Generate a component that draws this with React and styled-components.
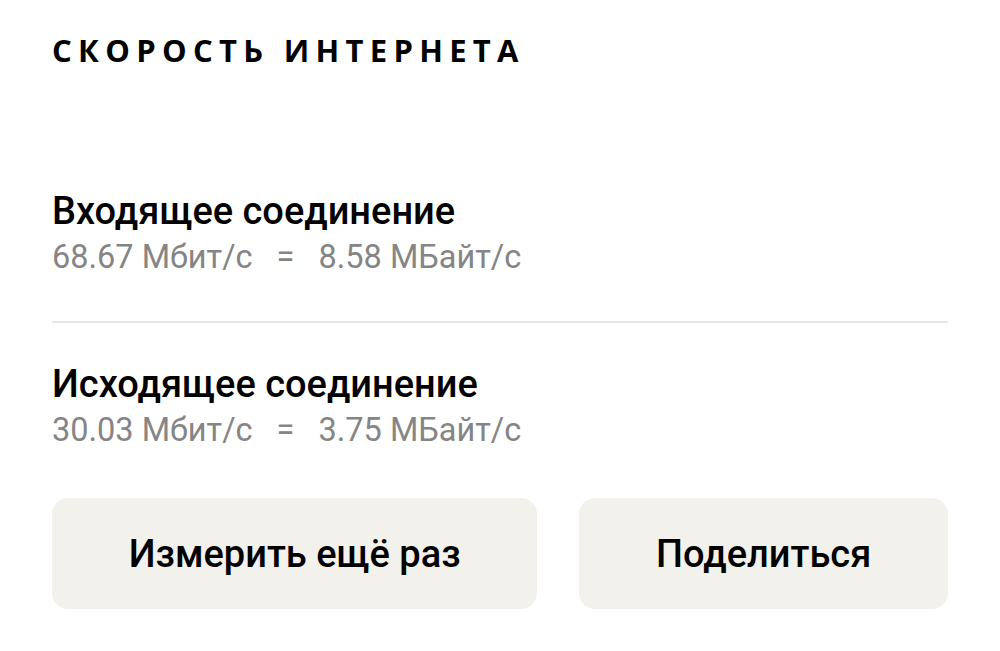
import React from "react";
import styled, { createGlobalStyle } from "styled-components";

const GlobalStyle = createGlobalStyle`
  html, body {
    margin: 0;
    padding: 0;
    background: #ffffff;
  }
  body {
    font-family: Roboto, "Open Sans", Arial, sans-serif;
    color: #000;
  }
`;

const speeds = [
  { title: "Входящее соединение", mbit: "68.67", mbyte: "8.58" },
  { title: "Исходящее соединение", mbit: "30.03", mbyte: "3.75" },
];

function App() {
  return (
    <Page>
      <GlobalStyle />
      <Header>Скорость интернета</Header>
      <Results>
        {speeds.map((s, i) => (
          <React.Fragment key={s.title}>
            {i > 0 && <Divider />}
            <Row>
              <RowTitle>{s.title}</RowTitle>
              <RowValue>
                {s.mbit} Мбит/с<Eq>=</Eq>{s.mbyte} МБайт/с
              </RowValue>
            </Row>
          </React.Fragment>
        ))}
      </Results>
      <Buttons>
        <Button>Измерить ещё раз</Button>
        <Button>Поделиться</Button>
      </Buttons>
    </Page>
  );
}

export default App;

const Page = styled.div`
  width: 1000px;
  height: 651px;
  box-sizing: border-box;
  padding: 30px 52px 0 52px;
  display: flex;
  flex-direction: column;
`;

const Header = styled.h1`
  margin: 0;
  font-family: "Open Sans", sans-serif;
  font-weight: 700;
  font-size: 31px;
  line-height: 40px;
  letter-spacing: 6.3px;
  text-transform: uppercase;
`;

const Results = styled.div`
  margin-top: 117px;
  display: flex;
  flex-direction: column;
`;

const Row = styled.div`
  display: flex;
  flex-direction: column;
`;

const RowTitle = styled.div`
  font-size: 38px;
  font-weight: 500;
  line-height: 48px;
`;

const RowValue = styled.div`
  font-size: 32.5px;
  line-height: 44px;
  color: #858585;
  white-space: pre;
`;

const Eq = styled.span`
  display: inline-block;
  margin: 0 24px;
`;

const Divider = styled.div`
  height: 2px;
  background: #e6e6e6;
  margin: 42px 0 37px;
`;

const Buttons = styled.div`
  margin-top: 46px;
  display: flex;
  gap: 42px;
`;

const Button = styled.button`
  flex: 1 1 auto;
  height: 111px;
  border: none;
  border-radius: 16px;
  background: #f2f1ec;
  font-family: Roboto, sans-serif;
  font-size: 38px;
  font-weight: 500;
  color: #000;
  padding: 0 40px;
`;
